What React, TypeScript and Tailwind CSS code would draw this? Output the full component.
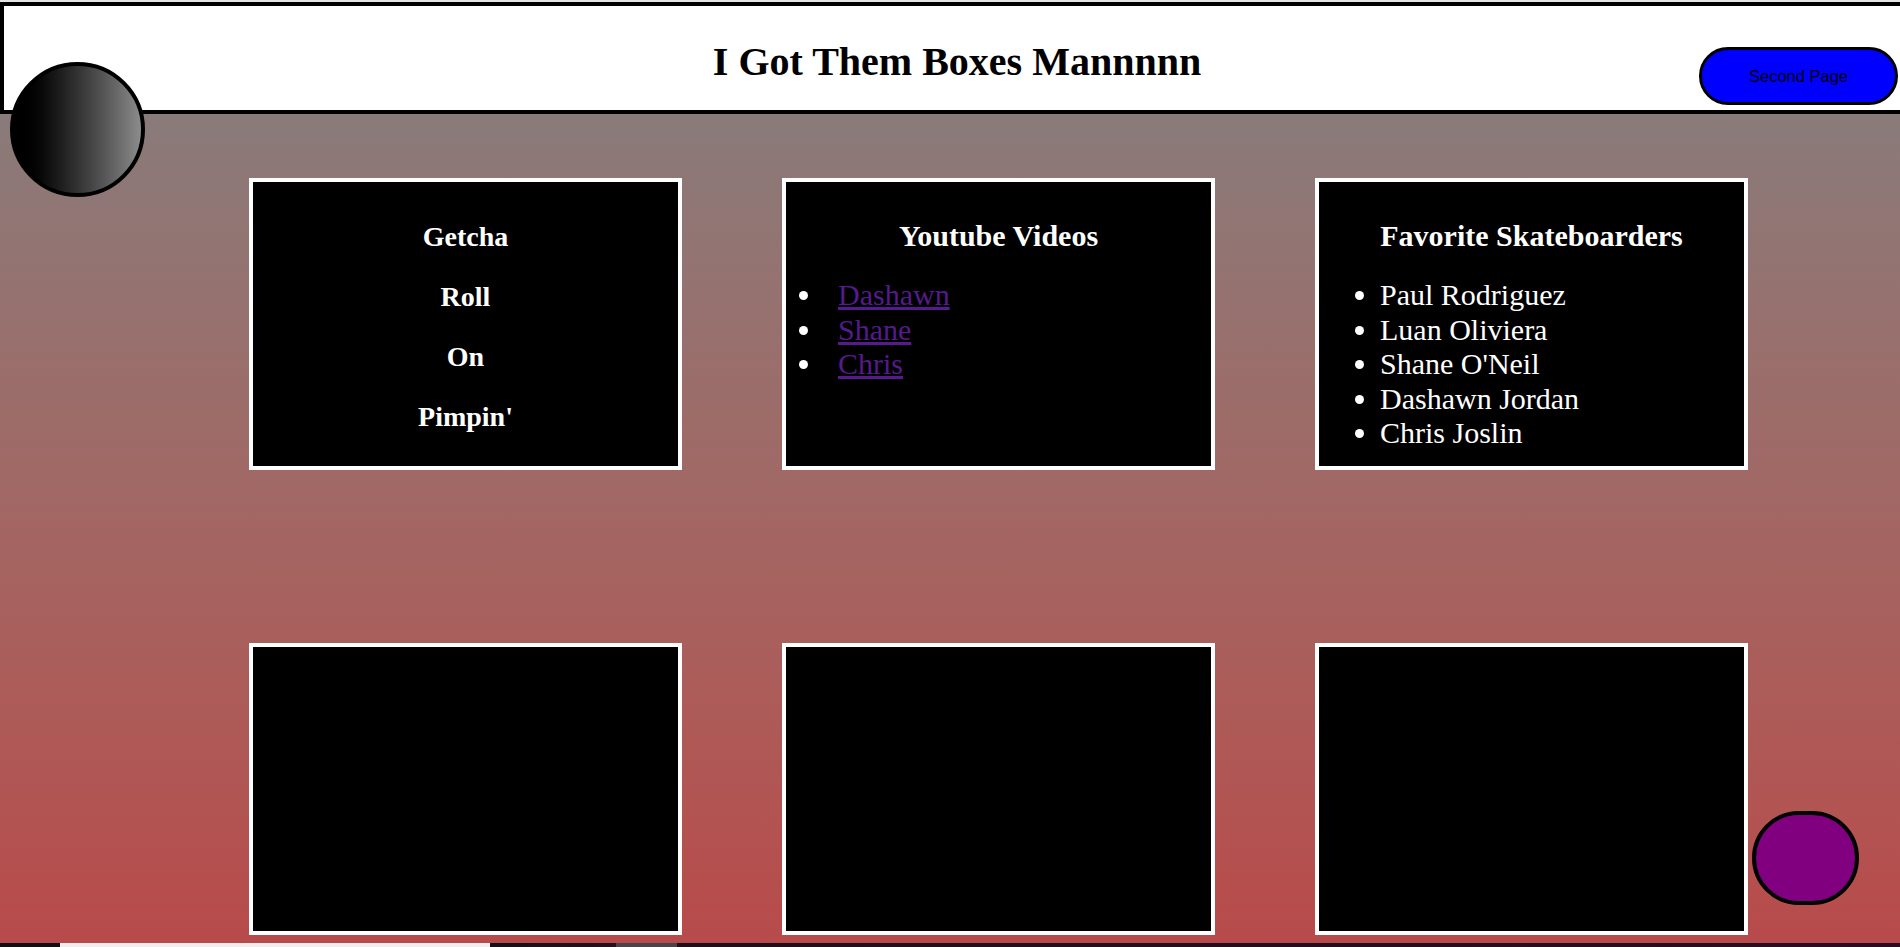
const serif = { fontFamily: '"Liberation Serif", "Times New Roman", serif' };

const boxes = ["Getcha", "Roll", "On", "Pimpin'"];
const videos = ["Dashawn", "Shane", "Chris"];
const skaters = ["Paul Rodriguez", "Luan Oliviera", "Shane O'Neil", "Dashawn Jordan", "Chris Joslin"];

function Card({ children }: { children?: React.ReactNode }) {
  return <div className="h-[292px] border-4 border-white bg-black text-white">{children}</div>;
}

export default function App() {
  return (
    <div
      className="relative h-[947px] w-full overflow-hidden bg-gradient-to-b from-[#808080] to-[#b84a4a]"
      style={serif}
    >
      <div className="h-[2px] w-full bg-[#e4e4e8]" />

      <header className="grid h-[112px] w-[1914px] grid-cols-[1fr_auto_1fr] border-4 border-black bg-white">
        <div />
        <h1 className="mt-[33px] text-[40px] font-bold leading-[46px] text-black">I Got Them Boxes Mannnnn</h1>
        <div className="flex items-end justify-end pr-[12px] pb-[5px]">
          <button
            className="h-[58px] w-[199px] rounded-full border-[3px] border-black bg-[#0000ff] text-[16.5px] text-black"
            style={{ fontFamily: '"Liberation Sans", Arial, sans-serif' }}
          >
            Second Page
          </button>
        </div>
      </header>

      <main className="mt-[64px] grid grid-cols-[433px_433px_433px] gap-x-[100px] gap-y-[173px] pl-[249px]">
        <Card>
          <div className="flex flex-col items-center gap-[28px] pt-[39px]">
            {boxes.map((b) => (
              <p key={b} className="text-[28px] font-bold leading-[32px]">
                {b}
              </p>
            ))}
          </div>
        </Card>

        <Card>
          <h3 className="pt-[37px] text-center text-[30px] font-bold leading-[34.5px]">Youtube Videos</h3>
          <ul className="mt-[24.5px] list-disc pl-[38px] text-[30px] leading-[34.5px]">
            {videos.map((v) => (
              <li key={v}>
                <a href="#" className="ml-[14px] text-[#551a8b] underline">
                  {v}
                </a>
              </li>
            ))}
          </ul>
        </Card>

        <Card>
          <h3 className="pt-[37px] text-center text-[30px] font-bold leading-[34.5px]">Favorite Skateboarders</h3>
          <ul className="mt-[24.5px] list-disc pl-[61px] text-[30px] leading-[34.5px]">
            {skaters.map((s) => (
              <li key={s}>{s}</li>
            ))}
          </ul>
        </Card>

        <Card />
        <Card />
        <Card />
      </main>

      <div className="mt-[8px] flex h-[4px] w-full">
        <div className="w-[60px] bg-[#0f0f14]" />
        <div className="w-[430px] bg-[#efefef]" />
        <div className="w-[126px] bg-gradient-to-r from-[#141018] to-[#24101e]" />
        <div className="w-[61px] bg-[#4a4448]" />
        <div className="flex-1 bg-gradient-to-r from-[#1e0f1a] to-[#2a0c22]" />
      </div>

      <div className="absolute left-[10px] top-[62px] h-[135px] w-[135px] rounded-full border-4 border-black bg-gradient-to-r from-black to-[#8c8c8c]" />
      <div className="absolute left-[1752px] top-[811px] h-[94px] w-[107px] rounded-full border-4 border-black bg-[#800080]" />
    </div>
  );
}
